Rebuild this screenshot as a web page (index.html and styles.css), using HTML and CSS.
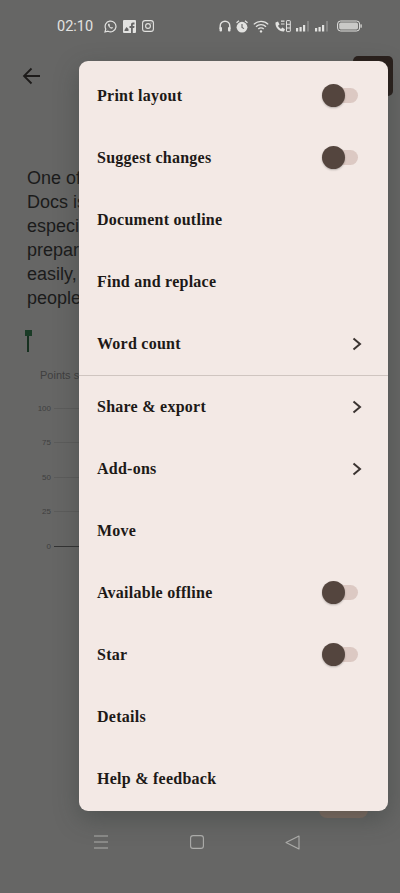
FILE: index.html
```html
<!DOCTYPE html>
<html lang="en">
<head>
    <meta charset="UTF-8">
    <meta name="viewport" content="width=device-width, initial-scale=1.0">
    <title>Document menu</title>
    <link rel="stylesheet" href="styles.css">
</head>
<body>
    <div class="page">
        <div class="status-bar">
            <span class="time">02:10</span>
            <div class="status-apps">
                <svg width="13" height="13" viewBox="0 0 13 13" fill="none" stroke="currentColor" stroke-width="1.2"><path d="M1 12l.8-3A5.4 5.4 0 1 1 4 11.2z"/><path d="M4.4 3.8c-.6.7-.5 1.7.4 2.9s2 1.9 2.9 2c.7 0 1.2-.5 1.3-1.1L7.9 7l-.7.6c-.7-.3-1.3-.9-1.7-1.7l.5-.7-.7-1.5z" fill="currentColor" stroke="none"/></svg>
                <svg width="13" height="13" viewBox="0 0 13 13"><rect width="13" height="13" rx="1" fill="currentColor"/><path d="M8 13V8H6.5V6H8V4.5C8 3.3 8.8 2.5 10 2.5h1.5v2h-1.2c-.4 0-.5.2-.5.5v1h1.7l-.3 2H9.800v5z" fill="#666"/><path d="M1.5 10l2-3 2 2v2h-4z" fill="#666"/></svg>
                <svg width="12" height="12" viewBox="0 0 12 12" fill="none" stroke="currentColor" stroke-width="1.1"><rect x=".6" y=".6" width="10.8" height="10.8" rx="2.5"/><circle cx="6" cy="6" r="2.4"/><circle cx="9" cy="3" r=".6" fill="currentColor" stroke="none"/></svg>
            </div>
            <div class="status-system">
                <svg width="12" height="12" viewBox="0 0 12 12" fill="none" stroke="currentColor" stroke-width="1.4"><path d="M1.2 9V6a4.8 4.8 0 0 1 9.6 0v3"/><rect x=".5" y="7" width="2.5" height="4.5" rx="1" fill="currentColor" stroke="none"/><rect x="9" y="7" width="2.5" height="4.5" rx="1" fill="currentColor" stroke="none"/></svg>
                <svg width="12" height="13" viewBox="0 0 12 13"><circle cx="6" cy="7.2" r="5.4" fill="currentColor"/><path d="M6 4v3.4l2 1.2" fill="none" stroke="#666" stroke-width="1.1"/><path d="M.5 2.8L3 .8M11.5 2.8L9 .8" stroke="currentColor" stroke-width="1.3"/></svg>
                <svg width="16" height="13" viewBox="0 0 16 13" fill="none" stroke="currentColor" stroke-width="1.3"><path d="M.8 4.4a10 10 0 0 1 14.4 0"/><path d="M3 6.8a7 7 0 0 1 10 0"/><path d="M5.3 9a3.8 3.8 0 0 1 5.4 0"/><circle cx="8" cy="11.4" r="1.2" fill="currentColor" stroke="none"/></svg>
                <svg width="17" height="13" viewBox="0 0 17 13"><path d="M1.5 2.5L4 1.5l1.5 3L4 5.700c.6 1.400 1.600 2.500 3 3.200l1.300-1.400 2.700 1.700-1 2.300C5.500 12 1 7.500 1.500 2.500z" fill="currentColor"/><path d="M7 1.2h3.500M7 4h3.500" stroke="currentColor" stroke-width="1.2" fill="none"/><rect x="12.5" y=".6" width="3.8" height="11" rx=".6" fill="none" stroke="currentColor"/><path d="M12.5 4.3h3.8M12.5 8h3.8" stroke="currentColor"/></svg>
                <svg class="signal" width="13" height="12" viewBox="0 0 13 12" fill="currentColor"><rect y="8" width="2.2" height="3.5"/><rect x="3.5" y="7" width="2.2" height="4.5"/><rect x="7" y="5" width="2.2" height="6.5"/><rect x="11.5" y="1" width="1" height="10.5" opacity=".5"/></svg>
                <svg class="signal" width="13" height="12" viewBox="0 0 13 12" fill="currentColor"><rect y="8" width="2.2" height="3.5"/><rect x="3.5" y="7" width="2.2" height="4.5"/><rect x="7" y="5" width="2.2" height="6.5"/><rect x="11.5" y="1" width="1" height="10.5" opacity=".5"/></svg>
                <svg class="battery" width="25" height="12" viewBox="0 0 25 12"><rect x=".6" y="1" width="22" height="10" rx="3" fill="none" stroke="currentColor"/><rect x="2.2" y="2.6" width="18.8" height="6.8" rx="1.6" fill="currentColor" opacity=".8"/><rect x="23.5" y="4.2" width="1.2" height="3.6" rx=".6" fill="currentColor"/></svg>
            </div>
        </div>

        <div class="top-bar">
            <svg width="19" height="20" viewBox="0 0 19 20" fill="none" stroke="#1d1b1a" stroke-width="1.8"><path d="M18 10H2M9.5 2.5L2 10l7.5 7.500"/></svg>
        </div>

        <div class="doc-text">
            <div>One of</div>
            <div>Docs is</div>
            <div>especially</div>
            <div>preparing</div>
            <div>easily,</div>
            <div>people</div>
        </div>

        <div class="flag"></div>

        <div class="chart">
            <div class="chart-title">Points s</div>
            <div class="chart-row"><span>100</span><i></i></div>
            <div class="chart-row"><span>75</span><i></i></div>
            <div class="chart-row"><span>50</span><i></i></div>
            <div class="chart-row"><span>25</span><i></i></div>
            <div class="chart-row chart-base"><span>0</span><i></i></div>
        </div>

        <div class="nav-bar">
            <svg width="16" height="14" viewBox="0 0 16 14" stroke="currentColor" stroke-width="1"><path d="M1 1h14M1 7h14M1 13h14"/></svg>
            <svg width="14" height="14" viewBox="0 0 14 14" fill="none" stroke="currentColor" stroke-width="1.1"><rect x=".6" y=".6" width="12.8" height="12.8" rx="2.5"/></svg>
            <svg width="15" height="15" viewBox="0 0 15 15" fill="none" stroke="currentColor" stroke-width="1.1"><path d="M14 1v13L1 7.5z" stroke-linejoin="round"/></svg>
        </div>

        <div class="top-action"></div>
        <div class="fab"></div>

        <div class="menu">
            <div class="menu-item">Print layout<span class="toggle"></span></div>
            <div class="menu-item">Suggest changes<span class="toggle"></span></div>
            <div class="menu-item">Document outline</div>
            <div class="menu-item">Find and replace</div>
            <div class="menu-item">Word count<span class="chevron"><svg width="10" height="14" viewBox="0 0 10 14" fill="none" stroke="currentColor" stroke-width="2"><path d="M1.5 1.5L8 7l-6.500 5.500"/></svg></span></div>
            <div class="menu-divider"></div>
            <div class="menu-item">Share &amp; export<span class="chevron"><svg width="10" height="14" viewBox="0 0 10 14" fill="none" stroke="currentColor" stroke-width="2"><path d="M1.5 1.5L8 7l-6.500 5.500"/></svg></span></div>
            <div class="menu-item">Add-ons<span class="chevron"><svg width="10" height="14" viewBox="0 0 10 14" fill="none" stroke="currentColor" stroke-width="2"><path d="M1.5 1.5L8 7l-6.500 5.500"/></svg></span></div>
            <div class="menu-item">Move</div>
            <div class="menu-item">Available offline<span class="toggle"></span></div>
            <div class="menu-item">Star<span class="toggle"></span></div>
            <div class="menu-item">Details</div>
            <div class="menu-item">Help &amp; feedback</div>
        </div>
    </div>
</body>
</html>
```

FILE: styles.css
```css
html, body {
    margin: 0;
    padding: 0;
}
body {
    font-family: "Liberation Sans", Arial, sans-serif;
    background-color: #666665;
}
.page {
    position: relative;
    width: 400px;
    height: 893px;
    overflow: hidden;
    display: flex;
    flex-direction: column;
}
.status-bar {
    display: flex;
    align-items: center;
    height: 52px;
    padding-left: 57px;
    color: #e2e2e0;
}
.time {
    font-family: Roboto, sans-serif;
    font-size: 14.5px;
    width: 47px;
}
.status-apps {
    display: flex;
    align-items: center;
    gap: 6px;
    width: 115px;
}
.status-system {
    display: flex;
    align-items: center;
    gap: 5px;
}
.status-system .signal {
    margin-right: 1px;
}
.status-system .battery {
    margin-left: 3px;
}
.top-bar {
    display: flex;
    align-items: center;
    height: 48px;
    padding-left: 22px;
}
.doc-text {
    margin-top: 66px;
    padding-left: 27px;
    font-size: 18px;
    line-height: 24px;
    color: #1b1b1b;
    white-space: nowrap;
}
.flag {
    width: 2px;
    height: 22px;
    margin: 20px 0 0 27px;
    background-color: #16301f;
    position: relative;
}
.flag::before {
    content: "";
    position: absolute;
    top: 0;
    left: -2px;
    width: 7px;
    height: 6px;
    background-color: #1a3b26;
}
.chart {
    width: 100px;
    margin-top: 16px;
    font-size: 11px;
    color: #3f3f3f;
}
.chart-title {
    padding-left: 40px;
    height: 14px;
    line-height: 14px;
    margin-bottom: 9px;
    white-space: nowrap;
}
.chart-row {
    display: flex;
    align-items: center;
    height: 34.5px;
    font-size: 8px;
}
.chart-row span {
    width: 51px;
    text-align: right;
}
.chart-row i {
    display: block;
    flex: 1;
    height: 1px;
    margin-left: 3px;
    background-color: #5c5c5b;
}
.chart-base i {
    background-color: #333;
}
.nav-bar {
    margin-top: auto;
    height: 58px;
    display: flex;
    align-items: flex-start;
    color: #aeaeac;
    padding: 0 0 0 93px;
    gap: 81px;
}
.top-action {
    position: absolute;
    top: 56px;
    left: 353px;
    width: 40px;
    height: 40px;
    border-radius: 5px;
    background-color: #2a201c;
}
.fab {
    position: absolute;
    top: 790px;
    left: 319px;
    width: 49px;
    height: 28px;
    border-radius: 8px;
    background-color: #7f6d63;
}
.menu {
    position: absolute;
    top: 61px;
    left: 79px;
    width: 309px;
    height: 750px;
    box-sizing: border-box;
    padding-top: 3px;
    border-radius: 9px;
    background-color: #f3e9e5;
    box-shadow: 0 8px 24px rgba(40, 50, 45, 0.35);
    overflow: hidden;
}
.menu-item {
    display: flex;
    align-items: center;
    justify-content: space-between;
    box-sizing: border-box;
    height: 62px;
    padding: 2px 30px 0 18px;
    font-family: "Liberation Serif", serif;
    font-weight: bold;
    font-size: 16px;
    letter-spacing: 0.25px;
    color: #1d1917;
}
.menu-divider {
    height: 1px;
    margin: 1px 0 -1px;
    background-color: #cfc5c0;
}
.toggle {
    position: relative;
    width: 36px;
    height: 15px;
    margin-top: -2px;
    border-radius: 8px;
    background-color: #dcc9c3;
}
.toggle::before {
    content: "";
    position: absolute;
    top: -4px;
    left: 0;
    width: 23px;
    height: 23px;
    border-radius: 50%;
    background-color: #54453e;
    box-shadow: 0 1px 2px rgba(0, 0, 0, 0.25);
}
.chevron {
    display: flex;
    margin-right: -4px;
    color: #3a3330;
}
```
